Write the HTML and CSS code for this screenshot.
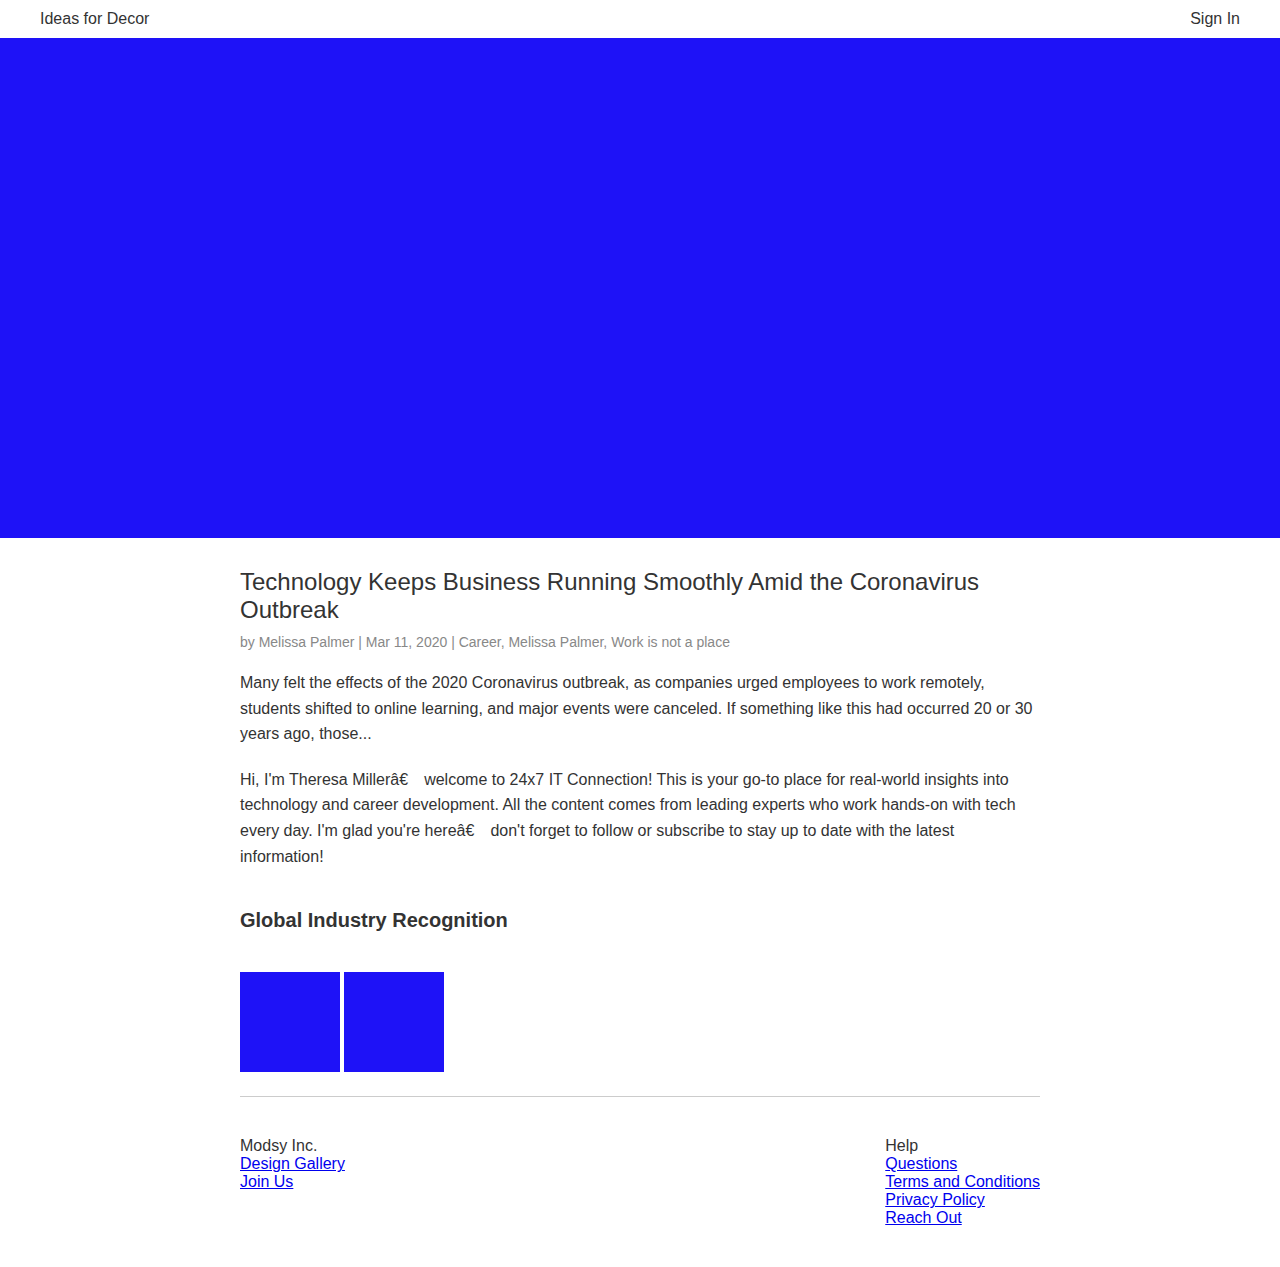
FILE: index.html
```html
<!DOCTYPE html>
<html lang="en">
<head>
<meta charset="utf-8">
<title>Ideas for Decor</title>
<link rel="stylesheet" href="styles.css">
</head>
<body>
<header class="topbar">
  <span class="brand">Ideas for Decor</span>
  <span class="signin">Sign In</span>
</header>
<div class="hero"></div>
<main class="content">
  <h1 class="title">Technology Keeps Business Running Smoothly Amid the Coronavirus Outbreak</h1>
  <div class="meta">by Melissa Palmer | Mar 11, 2020 | Career, Melissa Palmer, Work is not a place</div>
  <p class="text">Many felt the effects of the 2020 Coronavirus outbreak, as companies urged employees to work remotely, students shifted to online learning, and major events were canceled. If something like this had occurred 20 or 30 years ago, those...</p>
  <p class="text">Hi, I'm Theresa Millerâ€&emsp;welcome to 24x7 IT Connection! This is your go-to place for real-world insights into technology and career development. All the content comes from leading experts who work hands-on with tech every day. I'm glad you're hereâ€&emsp;don't forget to follow or subscribe to stay up to date with the latest information!</p>
  <h3 class="section-title">Global Industry Recognition</h3>
  <div class="badges">
    <div class="badge"></div>
    <div class="badge"></div>
  </div>
  <hr class="divider">
  <footer class="footer">
    <div class="col">
      <div class="col-title">Modsy Inc.</div>
      <a href="#">Design Gallery</a>
      <a href="#">Join Us</a>
    </div>
    <div class="col">
      <div class="col-title">Help</div>
      <a href="#">Questions</a>
      <a href="#">Terms and Conditions</a>
      <a href="#">Privacy Policy</a>
      <a href="#">Reach Out</a>
    </div>
  </footer>
</main>
</body>
</html>
```
FILE: styles.css
```css
html, body {
  margin: 0;
  padding: 0;
  background: #fff;
  font-family: "Liberation Sans", Arial, sans-serif;
  color: #333;
}
.topbar {
  height: 38px;
  padding: 0 40px;
  display: flex;
  justify-content: space-between;
  align-items: center;
  font-size: 16px;
  box-sizing: border-box;
}
.hero {
  height: 500px;
  background: #1e12f7;
}
.content {
  width: 800px;
  margin: 0 auto;
  padding: 30px 0 40px;
}
.title {
  margin: 0;
  font-size: 24px;
  line-height: 28px;
  font-weight: normal;
  color: #333;
}
.meta {
  margin-top: 10px;
  font-size: 14px;
  line-height: 17px;
  color: #888;
}
.text {
  margin: 19px 0 0;
  font-size: 16px;
  line-height: 25.6px;
}
.text + .text {
  margin-top: 20px;
}
.section-title {
  margin: 40px 0 0;
  font-size: 20px;
  line-height: 22px;
  font-weight: bold;
}
.badges {
  margin-top: 41px;
  display: flex;
  gap: 4px;
}
.badge {
  width: 100px;
  height: 100px;
  background: #1e12f7;
}
.divider {
  margin: 24px 0 0;
  border: 0;
  border-top: 1px solid #ccc;
  height: 0;
}
.footer {
  margin-top: 40px;
  display: flex;
  justify-content: space-between;
  font-size: 16px;
  line-height: 18px;
}
.col {
  display: flex;
  flex-direction: column;
}
.col a {
  color: #0000ee;
  text-decoration: underline;
}
```
